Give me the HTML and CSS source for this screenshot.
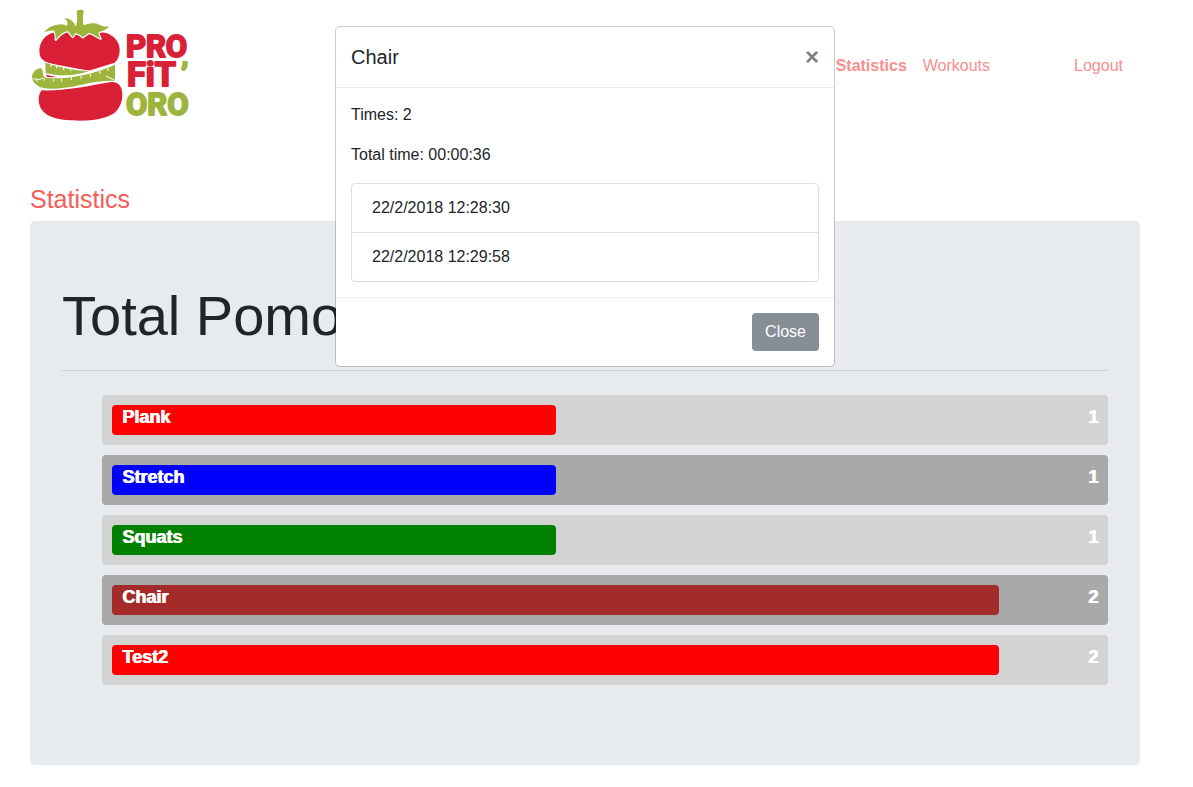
FILE: index.html
```html
<!DOCTYPE html>
<html lang="en">
<head>
<meta charset="utf-8">
<title>Profitoro - Statistics</title>
<link rel="stylesheet" href="styles.css">
</head>
<body>
<div class="page">
  <header class="header">
    <a class="brand" href="#" aria-label="Profitoro">
      <svg class="logo" viewBox="0 0 170 120" width="170" height="120">
        <g transform="scale(.33333)">
          <path fill="#da2037" d="M85 83C62 88 46 108 43 132Q42 149 48 159Q57 171 80 176L191 197L269 173C280 163 285 148 284 131C282 108 264 88 240 83Q160 72 85 83Z"/>
          <path fill="#da2037" d="M50 256Q100 258 170 247Q225 237 253 232Q280 226 290 252Q297 283 281 309C267 335 220 347 165 347C108 347 62 340 46 307C39 290 39 270 50 256Z"/>
          <path fill="#9db53c" stroke="#fff" stroke-width="7" paint-order="stroke" stroke-linejoin="round" d="M155 17Q166 12 176 17Q172 36 175 61Q188 57 201 55Q216 53 224 60Q239 68 253 64Q242 77 220 82Q222 94 227 101Q208 90 193 83Q182 90 173 97Q166 88 151 84L143 96Q136 88 128 78Q109 82 92 104Q94 91 88 77Q74 75 58 82Q70 64 93 60Q112 54 126 62Q132 53 119 39Q143 41 153 65Q159 44 155 17Z"/>
          <path fill="#9db53c" stroke="#fff" stroke-width="5" paint-order="stroke" d="M61 173Q120 193 192 199Q145 214 95 210L62 205Z"/>
          <path fill="#da2037" d="M64 209L96 217L66 220Z"/>
          <path fill="#9db53c" stroke="#fff" stroke-width="6" paint-order="stroke" stroke-linejoin="round" d="M49 189Q22 193 21 217Q24 243 58 250Q100 255 165 240Q220 226 270 227L270 179Q222 202 164 212Q108 223 70 219Q55 219 54 208Q54 197 49 189Z"/>
          <path fill="none" stroke="#fff" stroke-width="3" d="M25 221Q42 227 57 219M78 176V186M95 181V190M116 186V195M137 191V198M86 222V230M110 221V230M139 217V225M168 212V221M196 206V215M225 198V207M249 189V198M35 223L37 230M60 221L57 228M242 213L270 226"/>
        </g>
        <g class="wordmark">
          <text class="word word-red" x="101" y="52">PRO</text>
          <text class="word word-red word-large" x="102" y="81">FiT</text>
          <text class="word word-green" x="156" y="80">’</text>
          <text class="word word-green" x="101" y="110">ORO</text>
        </g>
      </svg>
    </a>
    <nav class="nav">
      <a class="nav-link active" href="#">Statistics</a>
      <a class="nav-link" href="#">Workouts</a>
      <a class="nav-link logout" href="#">Logout</a>
    </nav>
  </header>

  <main class="content">
    <h2 class="section-title">Statistics</h2>
    <section class="panel">
      <h1 class="panel-title">Total Pomodoros</h1>
      <hr class="rule">
      <ul class="stats">
        <li class="track"><div class="bar red" style="width:45%">Plank</div><span class="count">1</span></li>
        <li class="track dark"><div class="bar blue" style="width:45%">Stretch</div><span class="count">1</span></li>
        <li class="track"><div class="bar green" style="width:45%">Squats</div><span class="count">1</span></li>
        <li class="track dark"><div class="bar brown" style="width:90%">Chair</div><span class="count">2</span></li>
        <li class="track"><div class="bar red" style="width:90%">Test2</div><span class="count">2</span></li>
      </ul>
    </section>
  </main>

  <div class="overlay">
    <div class="modal" role="dialog" aria-labelledby="modal-title">
      <div class="modal-header">
        <h5 class="modal-title" id="modal-title">Chair</h5>
        <button class="dismiss" type="button" aria-label="Dismiss">×</button>
      </div>
      <div class="modal-body">
        <p class="line">Times: 2</p>
        <p class="line">Total time: 00:00:36</p>
        <ul class="entries">
          <li class="entry">22/2/2018 12:28:30</li>
          <li class="entry">22/2/2018 12:29:58</li>
        </ul>
      </div>
      <div class="modal-footer">
        <button class="close-button" type="button">Close</button>
      </div>
    </div>
  </div>
</div>
</body>
</html>
```

FILE: styles.css
```css
* { box-sizing: border-box; }

body {
  margin: 0;
  background: #fff;
  color: #212529;
  font: 16px/24px "Liberation Sans", Arial, sans-serif;
}

.page {
  position: relative;
  max-width: 1170px;
}

.header {
  display: flex;
  justify-content: space-between;
  padding: 5px 39px 0 25px;
}

.brand, .logo { display: block; }

.word {
  font-family: Roboto, "Liberation Sans", sans-serif;
  font-weight: 700;
  font-size: 31px;
  stroke-width: 2px;
  stroke-linejoin: round;
}
.word-large { font-size: 34px; }
.word-red { fill: #da2037; stroke: #da2037; }
.word-green { fill: #9db53c; stroke: #9db53c; }

.nav {
  display: flex;
  align-items: center;
  padding-top: 2px;
}
.nav-link {
  padding: 8px;
  color: #f88f8c;
  text-decoration: none;
}
.active { font-weight: 700; }
.logout { margin-left: 68px; }

.content { padding: 60px 30px 22px; }

.section-title {
  margin: 0 0 8px;
  color: #f45d58;
  font-size: 25px;
  font-weight: 400;
  line-height: 28px;
}

.panel {
  padding: 64px 32px 80px;
  border-radius: 5px;
  background: #e8ebee;
}
.panel-title {
  margin: 0 0 23px;
  font-size: 56px;
  font-weight: 400;
  line-height: 62px;
}
.rule {
  margin: 0 0 24px;
  border: 0;
  border-top: 1px solid #d0d3d6;
}

.stats {
  display: grid;
  gap: 10px;
  margin: 0;
  padding: 0 0 0 40px;
  list-style: none;
}
.track {
  display: flex;
  justify-content: space-between;
  padding: 10px;
  border-radius: 4px;
  background: #d3d3d3;
  color: #fff;
  font-size: 18px;
  font-weight: 700;
  line-height: 25px;
  text-shadow: 1px 0 0 #fff;
}
.dark { background: #a9a9a9; }
.bar {
  height: 30px;
  padding-left: 10px;
  border-radius: 4px;
}
.red { background: #f00; }
.blue { background: #00f; }
.green { background: green; }
.brown { background: brown; }

.overlay {
  position: absolute;
  inset: 0;
  display: flex;
  justify-content: center;
  align-items: flex-start;
  padding: 26px 16px;
}
.modal {
  width: 100%;
  max-width: 500px;
  border: 1px solid rgba(0, 0, 0, .2);
  border-radius: 5px;
  background: #fff;
  background-clip: padding-box;
}
.modal-header {
  display: flex;
  align-items: center;
  justify-content: space-between;
  padding: 15px;
  border-bottom: 1px solid #e9ecef;
}
.modal-title {
  margin: 0;
  font-size: 20px;
  font-weight: 400;
  line-height: 30px;
}
.dismiss {
  padding: 0;
  border: 0;
  background: none;
  color: #7f7f7f;
  font: 700 24px/24px "Liberation Sans", Arial, sans-serif;
}
.modal-body { padding: 15px; }
.line { margin: 0 0 16px; }
.entries {
  margin: 0;
  padding: 0;
  border: 1px solid #dfdfdf;
  border-radius: 4px;
  list-style: none;
}
.entry { padding: 12px 20px; }
.entry + .entry { border-top: 1px solid #dfdfdf; }
.modal-footer {
  display: flex;
  justify-content: flex-end;
  padding: 15px;
  border-top: 1px solid #e9ecef;
}
.close-button {
  padding: 7px 13px;
  border: 0;
  border-radius: 4px;
  background: #868e96;
  color: #fff;
  font: 16px/24px "Liberation Sans", Arial, sans-serif;
}
```
